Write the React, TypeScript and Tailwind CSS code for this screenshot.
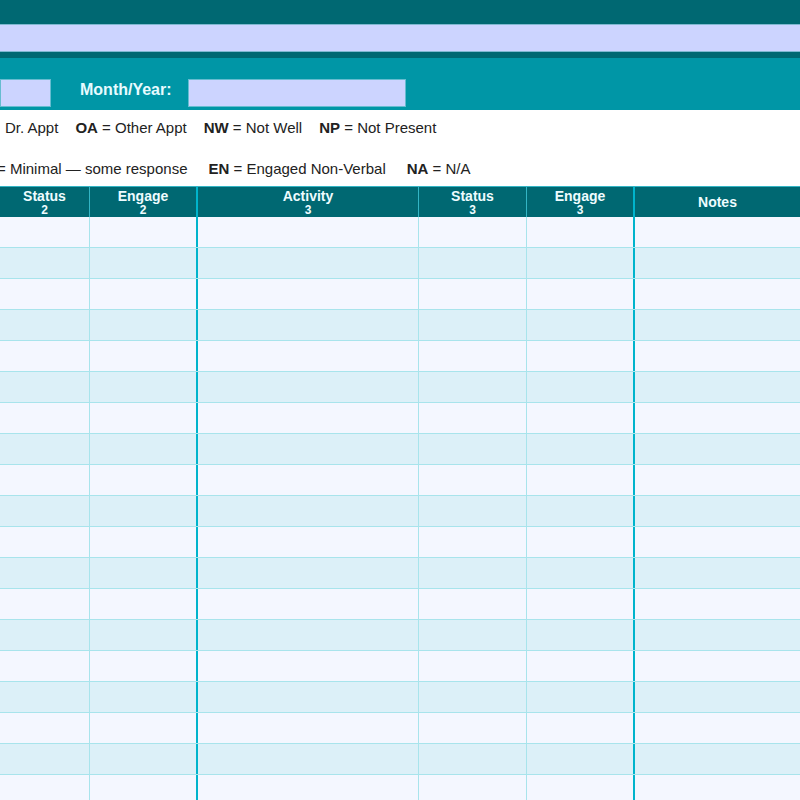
import React from "react";

const cols = [
  { t: "Status", s: "2", thick: false },
  { t: "Engage", s: "2", thick: true },
  { t: "Activity", s: "3", thick: false },
  { t: "Status", s: "3", thick: false },
  { t: "Engage", s: "3", thick: true },
  { t: "Notes", s: "", thick: false },
];

const widthCls = ["w-[90px]", "w-[108px]", "w-[221px]", "w-[108px]", "w-[108px]", "flex-1"];

export default function App() {
  const rows = Array.from({ length: 19 });
  return (
    <div className="w-[800px] h-[800px] overflow-hidden bg-white" style={{ fontFamily: '"Liberation Sans", Arial, sans-serif' }}>
      <div className="h-[24px] bg-[#006872]" />
      <div className="h-[28px] bg-[#ccd4ff] border-y border-[#7fb8d0]" />
      <div className="h-[6px] bg-[#006872]" />
      <div className="h-[52px] bg-[#0096a6] flex items-end pb-[3px]">
        <div className="w-[51px] h-[28px] bg-[#ccd4ff] border border-[#66bcd0]" />
        <div className="ml-[29px] w-[108px] mb-[5px] text-[#e8fbff] font-bold text-[16px] whitespace-nowrap">Month/Year:</div>
        <div className="w-[218px] h-[28px] bg-[#ccd4ff] border border-[#66bcd0]" />
      </div>
      <div className="h-[76px] text-[15px] text-[#222] relative">
        <div className="absolute left-[5px] top-[7px] flex whitespace-nowrap">
          <span>Dr. Appt</span>
          <span className="ml-[17px]"><b>OA</b> = Other Appt</span>
          <span className="ml-[17px]"><b>NW</b> = Not Well</span>
          <span className="ml-[17px]"><b>NP</b> = Not Present</span>
        </div>
        <div className="absolute left-[-3px] top-[48px] flex whitespace-nowrap">
          <span>= Minimal — some response</span>
          <span className="ml-[21px]"><b>EN</b> = Engaged Non-Verbal</span>
          <span className="ml-[21px]"><b>NA</b> = N/A</span>
        </div>
      </div>
      <div className="flex h-[31px] bg-[#006872] border-t border-[#33b5c5] text-[#eefcff] font-bold text-[14px]">
        {cols.map((c, i) => (
          <div
            key={i}
            className={`${widthCls[i]} shrink-0 flex flex-col items-center justify-center ${c.thick ? "border-r-2 border-[#00b4cc]" : i < 5 ? "border-r border-[#33b5c5]" : ""}`}
          >
            <span className="leading-[15px]">{c.t}</span>
            {c.s && <span className="text-[12px] leading-[12px]">{c.s}</span>}
          </div>
        ))}
      </div>
      {rows.map((_, r) => (
        <div key={r} className={`flex h-[31px] border-b border-[#a8e4ec] ${r % 2 === 0 ? "bg-[#f4f7ff]" : "bg-[#dcf0f8]"}`}>
          {cols.map((c, i) => (
            <div
              key={i}
              className={`${widthCls[i]} shrink-0 ${c.thick ? "border-r-2 border-[#00b4cc]" : i < 5 ? "border-r border-[#a8e4ec]" : ""}`}
            />
          ))}
        </div>
      ))}
    </div>
  );
}
